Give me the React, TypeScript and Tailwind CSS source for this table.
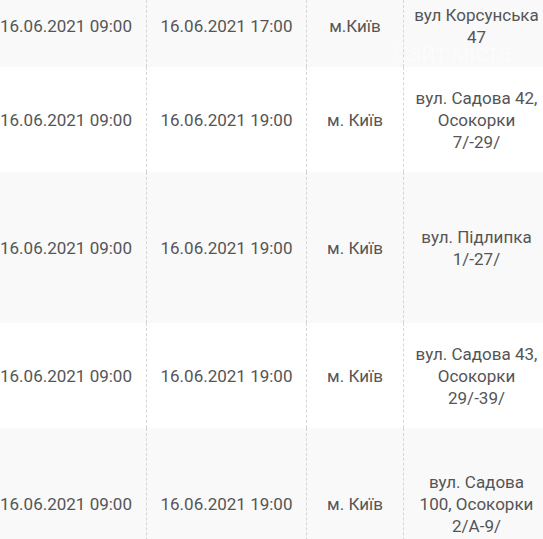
type Outage = {
  start: string;
  end: string;
  city: string;
  address: string;
  height: string;
  bg: string;
  pad?: string;
};

const rows: Outage[] = [
  { start: "16.06.2021 09:00", end: "16.06.2021 17:00", city: "м.Київ", address: "вул Корсунська 47", height: "h-[67px]", bg: "bg-[#f9f9f9]", pad: "pb-[15px]" },
  { start: "16.06.2021 09:00", end: "16.06.2021 19:00", city: "м. Київ", address: "вул. Садова 42, Осокорки 7/-29/", height: "h-[105px]", bg: "bg-white" },
  { start: "16.06.2021 09:00", end: "16.06.2021 19:00", city: "м. Київ", address: "вул. Підлипка 1/-27/", height: "h-[151px]", bg: "bg-[#f9f9f9]" },
  { start: "16.06.2021 09:00", end: "16.06.2021 19:00", city: "м. Київ", address: "вул. Садова 43, Осокорки 29/-39/", height: "h-[105px]", bg: "bg-white" },
  { start: "16.06.2021 09:00", end: "16.06.2021 19:00", city: "м. Київ", address: "вул. Садова 100, Осокорки 2/А-9/", height: "h-[152px]", bg: "bg-[#f9f9f9]" },
];

export default function App() {
  return (
    <div
      className="relative w-[543px] h-[539px] overflow-hidden bg-white text-[17px] leading-[22px] text-[#555]"
      style={{ fontFamily: "Roboto, 'Noto Sans', sans-serif" }}
    >
      <div className="ml-[-14px] w-[563px]">
        {rows.map((r, i) => (
          <div key={i} className={`flex ${r.height} ${r.bg}`}>
            <div className={`w-[160px] shrink-0 flex items-center justify-center text-center whitespace-nowrap ${r.pad ?? ""}`}>
              {r.start}
            </div>
            <div className={`w-[160px] shrink-0 flex items-center justify-center text-center whitespace-nowrap border-l border-dashed border-[#d6d6d6] ${r.pad ?? ""}`}>
              {r.end}
            </div>
            <div className={`w-[97px] shrink-0 flex items-center justify-center text-center border-l border-dashed border-[#d6d6d6] ${r.pad ?? ""}`}>
              {r.city}
            </div>
            <div className={`w-[146px] shrink-0 flex items-center justify-center text-center px-[10px] border-l border-dashed border-[#d6d6d6] ${r.pad ?? ""}`}>
              {r.address}
            </div>
          </div>
        ))}
      </div>
      {/* faint watermark over first row */}
      <div className="absolute left-[393px] top-[41px] text-[24px] leading-[24px] font-light text-white/60 pointer-events-none">
        Сайт міста
      </div>
    </div>
  );
}
